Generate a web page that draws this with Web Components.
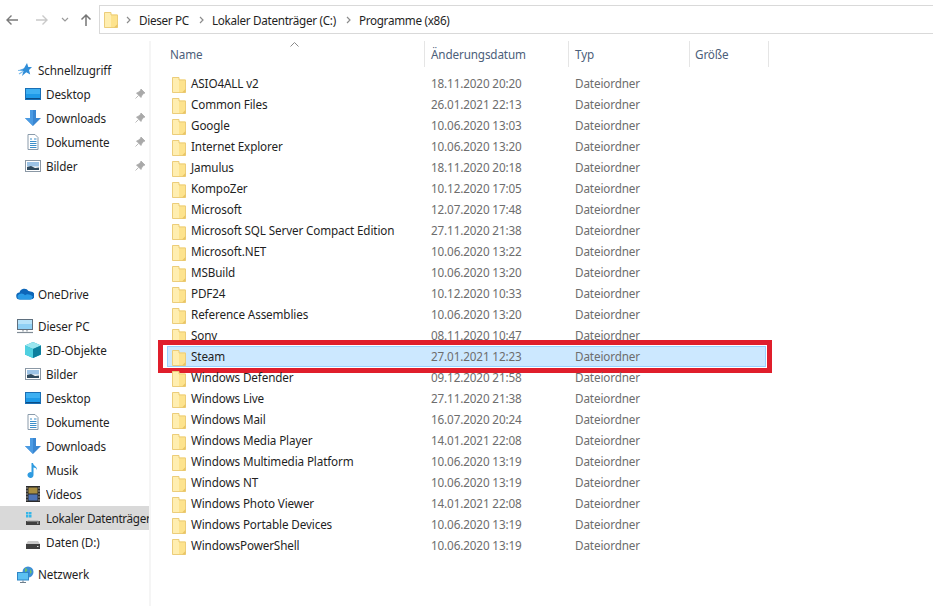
<!DOCTYPE html>
<html lang="de"><head><meta charset="utf-8"><title>Programme (x86)</title>
<style>html,body{margin:0;background:#fff;font:12px "Noto Sans",sans-serif;overflow:hidden}</style></head>
<body><x-explorer></x-explorer>
<script>
const ICONS={
folder:`<svg viewBox="0 0 14 16" width="14" height="16"><path d="M.5.5h6l1 2h6v13H.5z" fill="#fde38e"/><path d="M.5.5h6.500v15H.5z" fill="#ffeeb0"/><path d="M.5 15.500V.5h6.500v2.500h6.500v12.500z" fill="none" stroke="#eccd7a"/><path d="M10 15.500l3.500-3.500v3.500z" fill="#e9c566"/></svg>`,
star:`<svg viewBox="0 0 16 16" width="16" height="16"><path d="M10 1l1.300 4H15l-3 3 1.200 4.600L9.300 10.300 5 14l1.500-5-5-.5 5.500-2.300z" fill="#2f8dd8"/><path d="M1 8.500l5-.5M2 12l4-2.500" stroke="#7dbcec" stroke-width="1.200"/></svg>`,
desktop:`<svg viewBox="0 0 16 16" width="16" height="16"><rect x=".5" y="2.500" width="15" height="11" fill="#1e9ae8" stroke="#1a6fb5"/><rect x="1" y="3" width="14" height="5" fill="#3eb0f2"/><path d="M1 12.500h14" stroke="#0b4d86"/></svg>`,
down:`<svg viewBox="0 0 16 16" width="16" height="16"><path d="M5 0h6v8h5l-8 8-8-8h5z" fill="#3a87d2"/><path d="M5 0h3v16L0 8h5z" fill="#4b9be3"/></svg>`,
doc:`<svg viewBox="0 0 16 16" width="16" height="16"><path d="M3 .5h7l3 3v12H3z" fill="#fff" stroke="#8a9bab"/><path d="M5 5h2M9 5h2.500M5 7.500h6.500M5 9.500h6.500M5 11.500h6.500M5 13.500h6.500" stroke="#3e8fc9"/></svg>`,
pics:`<svg viewBox="0 0 16 16" width="16" height="16"><rect x=".5" y="2.500" width="15" height="11" fill="#fff" stroke="#8b98a5"/><rect x="2" y="4" width="12" height="4.500" fill="#9cc3e6"/><path d="M2 12V9l4-1 4 2 4-.5V12z" fill="#2f4a5e"/></svg>`,
pin:`<svg viewBox="0 0 12 12" width="12" height="12"><path d="M7 1l4 4-1.500.5L7.500 8 7 9.500 2.500 5 4 4.500 6.500 2.500zM4.500 7.500L1.500 10.500" fill="#a9a9a9" stroke="#a9a9a9" stroke-width=".8"/></svg>`,
cloud:`<svg viewBox="0 0 18 12" width="18" height="12"><path d="M4 11.500a3.500 3.500 0 0 1-.5-7A5 5 0 0 1 12.500 3a4 4 0 0 1 2 .5A4 4 0 0 1 14.500 11.500z" fill="#0d66b8"/><path d="M4 11.500a2.800 2.800 0 0 1-1-5.300c3-1.500 4.500-.5 6 1 2-1.500 5-1 7.800 1.300a3.500 3.500 0 0 1-2.800 3z" fill="#2a9be6"/></svg>`,
pc:`<svg viewBox="0 0 16 16" width="16" height="16"><rect x=".5" y="1.500" width="15" height="10" fill="#8fd0f5" stroke="#5f6f7e"/><rect x="1" y="2" width="14" height="4" fill="#b7e3fa"/><path d="M6 12v1.500M10 12v1.500" stroke="#8a949d" stroke-width="1.200"/><path d="M0 14.500h16" stroke="#7f8a94" stroke-width="1.200"/></svg>`,
cube:`<svg viewBox="0 0 16 16" width="16" height="16"><path d="M8 0l8 3.500v9L8 16 0 12.500v-9z" fill="#16a7c4"/><path d="M0 3.500L8 0l8 3.500L8 7z" fill="#9be6ef"/><path d="M8 7l8-3.500v9L8 16z" fill="#0d7f9e"/><path d="M0 3.500L8 7v9L0 12.500z" fill="#4fd0e0"/></svg>`,
music:`<svg viewBox="0 0 16 16" width="16" height="16"><path d="M6.500 1H8c.3 3 4.500 3.500 4 7-.8-1.800-2-2.500-3.500-2.500V13a3 3 0 1 1-2-2.800z" fill="#2f9be0"/></svg>`,
video:`<svg viewBox="0 0 16 16" width="16" height="16"><rect x="1" y="0" width="14" height="16" fill="#2b2b2b"/><rect x="3.500" y="1.500" width="9" height="6" fill="#a98f43"/><rect x="3.500" y="8.500" width="9" height="6" fill="#4e74b8"/><path d="M2 1.500v1M2 4.500v1M2 7.500v1M2 10.500v1M2 13.500v1M14 1.500v1M14 4.500v1M14 7.500v1M14 10.500v1M14 13.500v1" stroke="#ddd" stroke-width="1.200"/></svg>`,
cdrive:`<svg viewBox="0 0 16 16" width="16" height="16"><path d="M1 2h2.500v2.500H1zM4 2h2.500v2.500H4zM1 5h2.500v2.500H1zM4 5h2.500v2.500H4z" fill="#35b6e8"/><rect x="1" y="11" width="14" height="4" fill="#3f3f3f"/><path d="M3 10.500h10l1.500 1H1.500z" fill="#a8a8a8"/><rect x="12" y="12.500" width="1.500" height="1" fill="#ddd"/></svg>`,
drive:`<svg viewBox="0 0 16 16" width="16" height="16"><rect x="1" y="10" width="14" height="5" fill="#3f3f3f"/><path d="M3 7h10l2 3H1z" fill="#c9c9c9"/><rect x="12" y="12" width="1.500" height="1" fill="#ddd"/></svg>`,
net:`<svg viewBox="0 0 17 17" width="17" height="17"><circle cx="11" cy="6" r="5.500" fill="#3d8fd6"/><path d="M8 2c2 .5 3 2 2 3s-2 1-2 3M13 3l2 3-2 2z" fill="#6fc06a"/><rect x=".5" y="6.500" width="11" height="7.500" fill="#5cc0f2" stroke="#2f86c6"/><path d="M6 14.500v1.500M3 16.500h6" stroke="#6d7f8d"/></svg>`,
back:`<svg viewBox="0 0 14 12" width="14" height="12"><path d="M13 6H2M6.500 1.500L2 6l4.500 4.500" fill="none" stroke="currentColor" stroke-width="1.400"/></svg>`,
fwd:`<svg viewBox="0 0 14 12" width="14" height="12"><path d="M1 6h11M7.500 1.500L12 6l-4.500 4.500" fill="none" stroke="currentColor" stroke-width="1.400"/></svg>`,
caret:`<svg viewBox="0 0 8 5" width="8" height="5"><path d="M1 1l3 3 3-3" fill="none" stroke="currentColor" stroke-width="1.200"/></svg>`,
up:`<svg viewBox="0 0 12 14" width="12" height="14"><path d="M6 13V2M1.500 6.500L6 2l4.500 4.500" fill="none" stroke="currentColor" stroke-width="1.500"/></svg>`,
crumb:`<svg viewBox="0 0 5 8" width="5" height="8"><path d="M1 1l3 3-3 3" fill="none" stroke="currentColor" stroke-width="1.200"/></svg>`,
sort:`<svg viewBox="0 0 9 5" width="9" height="5"><path d="M.5 4.500l4-4 4 4" fill="none" stroke="#8a8a8a"/></svg>`
};
class XIcon extends HTMLElement{constructor(){super();this.attachShadow({mode:"open"})}
connectedCallback(){this.shadowRoot.innerHTML=`<style>:host{display:inline-flex;align-items:center;justify-content:center;flex:none}svg{display:block}</style>`+(ICONS[this.getAttribute("name")]||"")}}
customElements.define("x-icon",XIcon);

class XCrumb extends HTMLElement{constructor(){super();this.attachShadow({mode:"open"}).innerHTML=`<style>:host{display:flex;align-items:center;gap:8px;margin-left:10px;color:#1f1f1f;letter-spacing:-.3px}x-icon{color:#8c8c8c}</style><x-icon name="crumb"></x-icon><span><slot></slot></span>`}}
customElements.define("x-crumb",XCrumb);

class XToolbar extends HTMLElement{constructor(){super();this.attachShadow({mode:"open"}).innerHTML=`<style>
:host{display:flex;align-items:center;height:29px;padding:5px 0 0 0;margin-bottom:0}
.nav{display:flex;width:99px;flex:none;align-items:center;height:29px;box-sizing:border-box;padding-left:5px}
x-icon.b{color:#7a7a7a}x-icon.f{color:#c9c9c9;margin-left:16px}x-icon.c{color:#9a9a9a;margin-left:12px}x-icon.u{color:#767676;margin-left:11px}
.addr{flex:1;height:29px;box-sizing:border-box;border:1px solid #d9d9d9;border-right:0;display:flex;align-items:center;padding-left:4px;background:#fff}
.addr x-icon{margin-right:-2px}
</style><div class="nav"><x-icon class="b" name="back"></x-icon><x-icon class="f" name="fwd"></x-icon><x-icon class="c" name="caret"></x-icon><x-icon class="u" name="up"></x-icon></div>
<div class="addr"><x-icon name="folder"></x-icon><slot></slot></div>`}}
customElements.define("x-toolbar",XToolbar);

class XNavItem extends HTMLElement{constructor(){super();this.attachShadow({mode:"open"})}
connectedCallback(){const l=+this.getAttribute("level")||0,pin=this.hasAttribute("pinned"),sel=this.hasAttribute("selected");
this.shadowRoot.innerHTML=`<style>:host{display:flex;align-items:center;height:24px;box-sizing:border-box;padding-left:${l?25:17}px;color:#1f1f1f;white-space:nowrap;overflow:hidden;${sel?"background:#d9d9d9;letter-spacing:-.32px;":""}}
.t{margin-left:5px;flex:1;overflow:hidden}.i{width:16px;display:flex;justify-content:center}x-icon.p{margin-right:3px}</style>
<span class="i"><x-icon name="${this.getAttribute("icon")}"></x-icon></span><span class="t"><slot></slot></span>${pin?'<x-icon class="p" name="pin"></x-icon>':""}`}}
customElements.define("x-nav-item",XNavItem);

class XSidebar extends HTMLElement{constructor(){super();this.attachShadow({mode:"open"}).innerHTML=`<style>:host{display:block;width:149px;flex:none;margin-top:7px;padding-top:17px;border-right:2px solid #f5f5f5;overflow:hidden}
::slotted(.gap1){display:block;height:104px}::slotted(.gap2){display:block;height:8px}</style><slot></slot>`}}
customElements.define("x-sidebar",XSidebar);

class XHeader extends HTMLElement{constructor(){super();this.attachShadow({mode:"open"}).innerHTML=`<style>
:host{display:grid;grid-template-columns:258px 144px 121px 79px;margin-left:16px;width:602px;height:26px;margin-top:7px;position:relative;color:#4c607a}
div{display:flex;align-items:center;border-right:1px solid #e5e5e5;padding-left:6px;box-sizing:border-box}
div:first-of-type{padding-left:3px}
div:last-of-type{padding-left:5px}
.s{position:absolute;left:123px;top:1px;display:block}
</style><x-icon class="s" name="sort"></x-icon><div>Name</div><div>Änderungsdatum</div><div>Typ</div><div>Größe</div>`}}
customElements.define("x-header",XHeader);

class XRow extends HTMLElement{constructor(){super();this.attachShadow({mode:"open"})}
connectedCallback(){const s=this.hasAttribute("selected");
this.shadowRoot.innerHTML=`<style>
:host{display:grid;grid-template-columns:257px 144px 121px 77px;width:599px;height:21px;padding-bottom:2px;box-sizing:border-box;align-items:center;position:relative;${s?"background:#cce8ff;outline:1px solid #99d1ff;outline-offset:-1px;":""}}
.n{display:flex;align-items:center;gap:5px;padding-left:5px;color:#1f1f1f;white-space:nowrap}.o{color:#6d6d6d;padding-left:7px;white-space:nowrap}
.n x-icon{margin-top:2px;margin-bottom:-2px}
.mark{position:absolute;left:-9px;right:-6px;top:-6px;bottom:-6px;border:5px solid #e01e2b;box-sizing:border-box;pointer-events:none}
.mask{position:absolute;left:-4px;top:-1px;bottom:-1px;width:4px;background:#fff}
</style><div class="n"><x-icon name="folder"></x-icon><span><slot></slot></span></div><div class="o">${this.getAttribute("date")}</div><div class="o">Dateiordner</div><div></div>${s?'<div class="mask"></div><div class="mark"></div>':""}`}}
customElements.define("x-row",XRow);

class XList extends HTMLElement{constructor(){super();this.attachShadow({mode:"open"}).innerHTML=`<style>:host{display:block;flex:1;min-width:0}
.rows{margin:6px 0 0 16px;display:block}</style><x-header></x-header><div class="rows"><slot></slot></div>`}}
customElements.define("x-list",XList);

const NAV=`<x-nav-item icon="star">Schnellzugriff</x-nav-item>
<x-nav-item level="1" icon="desktop" pinned>Desktop</x-nav-item>
<x-nav-item level="1" icon="down" pinned>Downloads</x-nav-item>
<x-nav-item level="1" icon="doc" pinned>Dokumente</x-nav-item>
<x-nav-item level="1" icon="pics" pinned>Bilder</x-nav-item>
<span class="gap1"></span>
<x-nav-item icon="cloud">OneDrive</x-nav-item>
<span class="gap2"></span>
<x-nav-item icon="pc">Dieser PC</x-nav-item>
<x-nav-item level="1" icon="cube">3D-Objekte</x-nav-item>
<x-nav-item level="1" icon="pics">Bilder</x-nav-item>
<x-nav-item level="1" icon="desktop">Desktop</x-nav-item>
<x-nav-item level="1" icon="doc">Dokumente</x-nav-item>
<x-nav-item level="1" icon="down">Downloads</x-nav-item>
<x-nav-item level="1" icon="music">Musik</x-nav-item>
<x-nav-item level="1" icon="video">Videos</x-nav-item>
<x-nav-item level="1" icon="cdrive" selected>Lokaler Datenträger</x-nav-item>
<x-nav-item level="1" icon="drive">Daten (D:)</x-nav-item>
<span class="gap2"></span>
<x-nav-item icon="net">Netzwerk</x-nav-item>`;
const FILES=[["ASIO4ALL v2","18.11.2020 20:20"],["Common Files","26.01.2021 22:13"],["Google","10.06.2020 13:03"],["Internet Explorer","10.06.2020 13:20"],["Jamulus","18.11.2020 20:18"],["KompoZer","10.12.2020 17:05"],["Microsoft","12.07.2020 17:48"],["Microsoft SQL Server Compact Edition","27.11.2020 21:38"],["Microsoft.NET","10.06.2020 13:22"],["MSBuild","10.06.2020 13:20"],["PDF24","10.12.2020 10:33"],["Reference Assemblies","10.06.2020 13:20"],["Sony","08.11.2020 10:47"],["Steam","27.01.2021 12:23",1],["Windows Defender","09.12.2020 21:58"],["Windows Live","27.11.2020 21:38"],["Windows Mail","16.07.2020 20:24"],["Windows Media Player","14.01.2021 22:08"],["Windows Multimedia Platform","10.06.2020 13:19"],["Windows NT","10.06.2020 13:19"],["Windows Photo Viewer","14.01.2021 22:08"],["Windows Portable Devices","10.06.2020 13:19"],["WindowsPowerShell","10.06.2020 13:19"]];
class XExplorer extends HTMLElement{constructor(){super();this.attachShadow({mode:"open"}).innerHTML=`<style>
:host{display:flex;flex-direction:column;width:933px;height:606px;overflow:hidden;font:11.7px "Noto Sans",sans-serif;letter-spacing:-.13px}
.main{display:flex;flex:1;min-height:0}
</style><x-toolbar><x-crumb>Dieser PC</x-crumb><x-crumb>Lokaler Datenträger (C:)</x-crumb><x-crumb>Programme (x86)</x-crumb></x-toolbar>
<div class="main"><x-sidebar>${NAV}</x-sidebar><x-list>${FILES.map(f=>`<x-row date="${f[1]}"${f[2]?" selected":""}>${f[0]}</x-row>`).join("")}</x-list></div>`}}
customElements.define("x-explorer",XExplorer);
</script></body></html>
